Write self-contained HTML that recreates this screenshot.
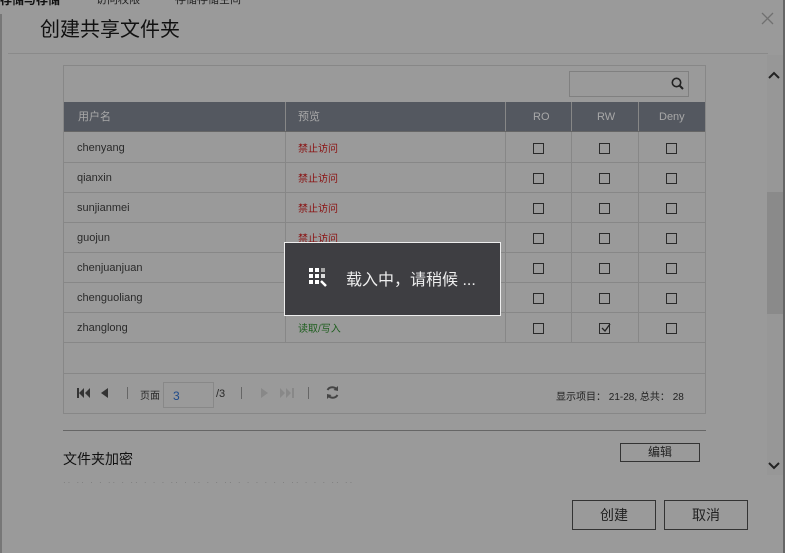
<!DOCTYPE html>
<html><head><meta charset="utf-8"><style>
*{margin:0;padding:0;box-sizing:border-box}
body{width:785px;height:553px;overflow:hidden;background:#9a9a9a;font-family:"Liberation Sans","Noto Sans CJK SC",sans-serif;position:relative;color:#222}
.a{position:absolute}
.t{font-size:11px;color:#2a2a2a}
.cb{position:absolute;width:11px;height:11px;border:1px solid #2a2a2a}
.red{color:#8a1010;font-size:10px}
.hl{position:absolute;height:1px;background:#878787}
.vl{position:absolute;width:1px;background:#878787}
.btn{position:absolute;border:1px solid #333;text-align:center;color:#222}
</style></head><body>
<div class="a" style="left:0;top:-9px;font-size:12px;color:#111;font-weight:bold">存储与存储</div>
<div class="a" style="left:96px;top:-9px;font-size:11px;color:#222">访问权限</div>
<div class="a" style="left:175px;top:-9px;font-size:11px;color:#222">存储存储空间</div>
<div class="a" style="left:0;top:14px;width:2px;height:539px;background:#777"></div>
<div class="a" style="left:40px;top:13px;font-size:20px;color:#111">创建共享文件夹</div>
<svg class="a" style="left:761px;top:12px" width="13" height="13"><path d="M1 1L12 12M12 1L1 12" stroke="#707070" stroke-width="1.3"/></svg>
<div class="hl" style="left:8px;top:53px;width:760px;background:#8a8a8a"></div>
<!-- scrollbar -->
<div class="a" style="left:767px;top:55px;width:16px;height:420px;background:#979797"></div>
<div class="a" style="left:767px;top:192px;width:16px;height:122px;background:#8a8a8a"></div>
<div class="a" style="left:783px;top:0;width:2px;height:553px;background:#666"></div>
<svg class="a" style="left:767px;top:70px" width="14" height="10"><path d="M2 8L7 3L12 8" fill="none" stroke="#222" stroke-width="2"/></svg>
<svg class="a" style="left:767px;top:461px" width="14" height="10"><path d="M2 2L7 7L12 2" fill="none" stroke="#222" stroke-width="2"/></svg>
<!-- table container -->
<div class="a" style="left:63px;top:65px;width:643px;height:349px;border:1px solid #878787"></div>
<div class="a" style="left:569px;top:71px;width:120px;height:26px;border:1px solid #808080"></div>
<svg class="a" style="left:670px;top:76px" width="16" height="16"><circle cx="6.5" cy="6.5" r="4.2" fill="none" stroke="#222" stroke-width="1.6"/><path d="M9.5 9.5L13 13" stroke="#222" stroke-width="2"/></svg>
<div class="a" style="left:64px;top:102px;width:641px;height:29px;background:#545860"></div>
<div class="a" style="left:78px;top:108px;font-size:11px;color:#a8a8a8">用户名</div>
<div class="a" style="left:298px;top:108px;font-size:11px;color:#a8a8a8">预览</div>
<div class="a" style="left:533px;top:111px;font-size:11px;color:#a8a8a8">RO</div>
<div class="a" style="left:597px;top:111px;font-size:11px;color:#a8a8a8">RW</div>
<div class="a" style="left:659px;top:111px;font-size:11px;color:#a8a8a8">Deny</div>
<div class="vl" style="left:285px;top:102px;height:241px"></div>
<div class="vl" style="left:505px;top:102px;height:241px"></div>
<div class="vl" style="left:571px;top:102px;height:241px"></div>
<div class="vl" style="left:638px;top:102px;height:241px"></div>
<div class="hl" style="left:64px;top:131px;width:641px;background:#666"></div>
<div class="hl" style="left:64px;top:162px;width:641px"></div>
<div class="hl" style="left:64px;top:192px;width:641px"></div>
<div class="hl" style="left:64px;top:222px;width:641px"></div>
<div class="hl" style="left:64px;top:252px;width:641px"></div>
<div class="hl" style="left:64px;top:282px;width:641px"></div>
<div class="hl" style="left:64px;top:312px;width:641px"></div>
<div class="hl" style="left:64px;top:342px;width:641px"></div>
<div class="hl" style="left:64px;top:373px;width:641px"></div>
<div class="a t" style="left:77px;top:142px">chenyang</div>
<div class="a t" style="left:77px;top:172px">qianxin</div>
<div class="a t" style="left:77px;top:202px">sunjianmei</div>
<div class="a t" style="left:77px;top:232px">guojun</div>
<div class="a t" style="left:77px;top:262px">chenjuanjuan</div>
<div class="a t" style="left:77px;top:292px">chenguoliang</div>
<div class="a t" style="left:77px;top:322px">zhanglong</div>
<div class="a red" style="left:298px;top:140px">禁止访问</div>
<div class="a red" style="left:298px;top:170px">禁止访问</div>
<div class="a red" style="left:298px;top:200px">禁止访问</div>
<div class="a red" style="left:298px;top:230px">禁止访问</div>
<div class="a red" style="left:298px;top:260px">禁止访问</div>
<div class="a red" style="left:298px;top:290px">禁止访问</div>
<div class="a" style="left:298px;top:320px;font-size:10px;color:#1e5e1e">读取/写入</div>
<div class="cb" style="left:533px;top:143px"></div><div class="cb" style="left:599px;top:143px"></div><div class="cb" style="left:666px;top:143px"></div>
<div class="cb" style="left:533px;top:173px"></div><div class="cb" style="left:599px;top:173px"></div><div class="cb" style="left:666px;top:173px"></div>
<div class="cb" style="left:533px;top:203px"></div><div class="cb" style="left:599px;top:203px"></div><div class="cb" style="left:666px;top:203px"></div>
<div class="cb" style="left:533px;top:233px"></div><div class="cb" style="left:599px;top:233px"></div><div class="cb" style="left:666px;top:233px"></div>
<div class="cb" style="left:533px;top:263px"></div><div class="cb" style="left:599px;top:263px"></div><div class="cb" style="left:666px;top:263px"></div>
<div class="cb" style="left:533px;top:293px"></div><div class="cb" style="left:599px;top:293px"></div><div class="cb" style="left:666px;top:293px"></div>
<div class="cb" style="left:533px;top:323px"></div><div class="cb" style="left:599px;top:323px"></div><div class="cb" style="left:666px;top:323px"></div>
<svg class="a" style="left:600px;top:322px" width="12" height="12"><path d="M2 6L5 9L10 2" fill="none" stroke="#222" stroke-width="1.3"/></svg>
<!-- pager -->
<svg class="a" style="left:77px;top:388px" width="14" height="10"><rect x="0" y="0" width="2" height="10" fill="#333"/><path d="M7 0L2 5L7 10ZM13 0L8 5L13 10Z" fill="#333"/></svg>
<svg class="a" style="left:100px;top:388px" width="10" height="10"><path d="M8 0L1 5L8 10Z" fill="#333"/></svg>
<div class="vl" style="left:127px;top:387px;height:12px;background:#666"></div>
<div class="a t" style="left:140px;top:387px;font-size:10px">页面</div>
<div class="a" style="left:163px;top:382px;width:51px;height:26px;border:1px solid #888"></div>
<div class="a" style="left:173px;top:389px;font-size:12px;color:#1e4a8a">3</div>
<div class="a t" style="left:216px;top:388px">/3</div>
<div class="vl" style="left:241px;top:387px;height:12px;background:#666"></div>
<svg class="a" style="left:260px;top:388px" width="10" height="10"><path d="M1 0L8 5L1 10Z" fill="#888"/></svg>
<svg class="a" style="left:280px;top:388px" width="14" height="10"><path d="M0 0L5 5L0 10ZM6 0L11 5L6 10Z" fill="#888"/><rect x="12" y="0" width="2" height="10" fill="#888"/></svg>
<div class="vl" style="left:308px;top:387px;height:12px;background:#666"></div>
<svg class="a" style="left:325px;top:385px" width="15" height="15"><path d="M12 5A5.5 5.5 0 0 0 2.5 5" fill="none" stroke="#444" stroke-width="2"/><path d="M3 10A5.5 5.5 0 0 0 12.5 10" fill="none" stroke="#444" stroke-width="2"/><path d="M13 1L13 6L8.5 5Z M2 14L2 9L6.5 10Z" fill="#444"/></svg>
<div class="a" style="left:556px;top:388px;font-size:10px;color:#222">显示项目： 21-28, 总共： 28</div>
<div class="hl" style="left:63px;top:430px;width:643px;background:#666"></div>
<div class="a" style="left:63px;top:449px;font-size:14px;color:#111">文件夹加密</div>
<div class="btn" style="left:620px;top:443px;width:80px;height:19px;font-size:12px;line-height:17px">编辑</div>
<div class="a" style="left:63px;top:478px;font-size:8px;color:#777;letter-spacing:2px">·· ·· · · ·· · ·· · ·  · ·· · ·· · · ·· · ·  · · ·  · ·· · · · ·· ··</div>
<div class="btn" style="left:572px;top:500px;width:84px;height:30px;font-size:14px;line-height:28px">创建</div>
<div class="btn" style="left:664px;top:500px;width:84px;height:30px;font-size:14px;line-height:28px">取消</div>
<!-- loading -->
<div class="a" style="left:284px;top:242px;width:217px;height:74px;background:#3e3e42;border:1px solid #eee"></div>
<svg class="a" style="left:309px;top:268px" width="22" height="22">
<rect x="0" y="0" width="4" height="4" fill="#fff"/><rect x="6" y="0" width="4" height="4" fill="#fff"/><rect x="12" y="0" width="4" height="4" fill="#aaa"/>
<rect x="0" y="6" width="4" height="4" fill="#fff"/><rect x="6" y="6" width="4" height="4" fill="#fff"/><rect x="12" y="6" width="4" height="4" fill="#ddd"/>
<rect x="0" y="12" width="4" height="4" fill="#fff"/><rect x="6" y="12" width="4" height="4" fill="#fff"/><path d="M12 13L17 18" stroke="#fff" stroke-width="2.5"/></svg>
<div class="a" style="left:346px;top:266px;font-size:16px;color:#eee">载入中，请稍候 ...</div>
</body></html>
